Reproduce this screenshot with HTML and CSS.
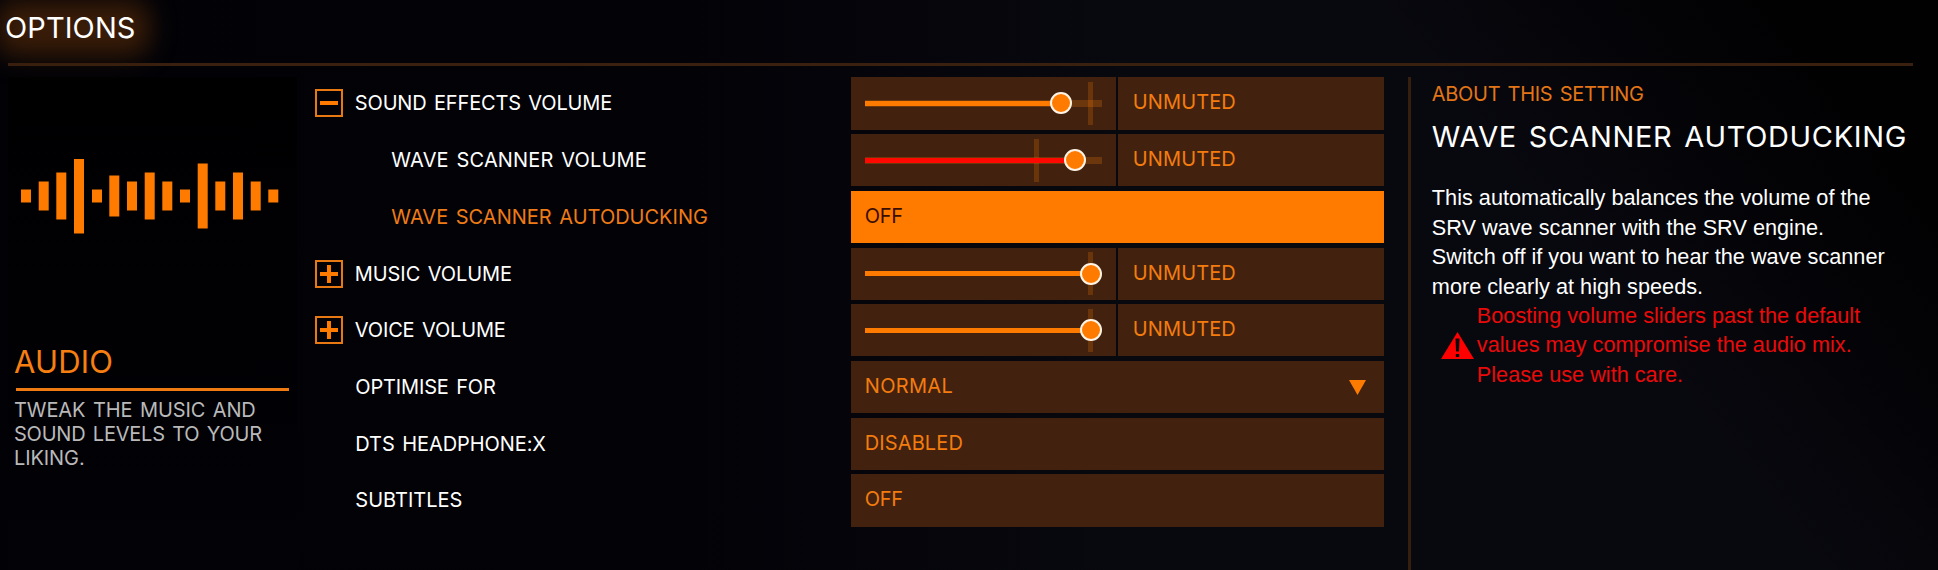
FILE: index.html
```html
<!DOCTYPE html>
<html lang="en">
<head>
<meta charset="utf-8">
<title>Options</title>
<link rel="stylesheet" href="styles.css">
</head>
<body>
<header class="header"><h1 class="title">OPTIONS</h1></header>
<main class="main">
  <aside class="category">
    <svg class="wave" viewBox="0 0 258 76" width="258" height="76" fill="#ff7b00">
      <rect x="0" y="31.5" width="10" height="13"/>
      <rect x="17.7" y="23.5" width="10" height="29"/>
      <rect x="35.3" y="14.5" width="10" height="47"/>
      <rect x="53" y="1" width="10" height="74.5"/>
      <rect x="71" y="31.5" width="10" height="13"/>
      <rect x="88.3" y="17.5" width="10" height="41"/>
      <rect x="106" y="23.5" width="10" height="29"/>
      <rect x="123.7" y="14.5" width="10" height="47"/>
      <rect x="141.3" y="23.5" width="10" height="29"/>
      <rect x="159" y="31.5" width="10" height="13"/>
      <rect x="176.7" y="5.5" width="10" height="65"/>
      <rect x="194.3" y="23.5" width="10" height="29"/>
      <rect x="212" y="14.5" width="10" height="47"/>
      <rect x="229.7" y="23.5" width="10" height="29"/>
      <rect x="247.3" y="31.5" width="10" height="13"/>
    </svg>
    <h2 class="category-name">AUDIO</h2>
    <p class="category-text">TWEAK THE MUSIC AND<br><span class="snug">SOUND LEVELS TO YOUR</span><br>LIKING.</p>
  </aside>

  <section class="settings">
    <div class="row">
      <div class="label"><span class="toggle minus"></span><span class="tight">SOUND EFFECTS VOLUME</span></div>
      <div class="cell slider"><div class="track"><i class="mark high"></i><i class="fill" style="width:196px"></i><i class="knob" style="left:196px"></i></div></div>
      <div class="cell mute">UNMUTED</div>
    </div>
    <div class="row">
      <div class="label sub"><span class="loose">WAVE SCANNER VOLUME</span></div>
      <div class="cell slider"><div class="track"><i class="mark mid"></i><i class="fill over" style="width:210px"></i><i class="knob" style="left:210px"></i></div></div>
      <div class="cell mute">UNMUTED</div>
    </div>
    <div class="row">
      <div class="label sub active">WAVE SCANNER AUTODUCKING</div>
      <div class="cell wide selected"><span class="off">OFF</span></div>
    </div>
    <div class="row">
      <div class="label"><span class="toggle plus"></span><span class="snug">MUSIC VOLUME</span></div>
      <div class="cell slider"><div class="track to-mark"><i class="mark high"></i><i class="fill" style="width:226px"></i><i class="knob" style="left:226px"></i></div></div>
      <div class="cell mute">UNMUTED</div>
    </div>
    <div class="row">
      <div class="label"><span class="toggle plus"></span><span class="tight">VOICE VOLUME</span></div>
      <div class="cell slider"><div class="track to-mark"><i class="mark high"></i><i class="fill" style="width:226px"></i><i class="knob" style="left:226px"></i></div></div>
      <div class="cell mute">UNMUTED</div>
    </div>
    <div class="row">
      <div class="label plain"><span class="tight">OPTIMISE FOR</span></div>
      <div class="cell wide"><span class="wider">NORMAL</span><svg class="arrow" viewBox="0 0 17 15" width="17" height="15"><path d="M0 0H17L8.5 15Z" fill="#ff7b00"/></svg></div>
    </div>
    <div class="row">
      <div class="label plain"><span class="snug">DTS HEADPHONE:X</span></div>
      <div class="cell wide">DISABLED</div>
    </div>
    <div class="row">
      <div class="label plain">SUBTITLES</div>
      <div class="cell wide"><span class="off">OFF</span></div>
    </div>
  </section>

  <aside class="about">
    <h3 class="about-head">ABOUT THIS SETTING</h3>
    <h2 class="about-title">WAVE SCANNER AUTODUCKING</h2>
    <p class="about-text">This automatically balances the volume of the<br>SRV wave scanner with the SRV engine.<br>Switch off if you want to hear the wave scanner<br>more clearly at high speeds.</p>
    <div class="warning">
      <svg viewBox="0 0 33 27" width="33" height="27"><path d="M16.5 0L33 27H0Z" fill="#f00"/><path d="M14.5 6.5H18.5L18 19.5H15ZM14.8 22H18.2V25H14.8Z" fill="#08080f"/></svg>
      <p>Boosting volume sliders past the default<br>values may compromise the audio mix.<br>Please use with care.</p>
    </div>
  </aside>
</main>
</body>
</html>
```
FILE: styles.css
```css
* { box-sizing: border-box; }
body {
  margin: 0;
  width: 1938px;
  height: 570px;
  overflow: hidden;
  display: flex;
  flex-direction: column;
  background:
    linear-gradient(52deg, transparent 76%, #010102 93%),
    linear-gradient(90deg, #020206 0, #020207 35%, #08080f 58%, #08080f 100%);
  color: #fff;
  font: 20px/24px Inter, "Liberation Sans", sans-serif;
  word-spacing: 2px;
}
h1, h2, h3, p { margin: 0; font-weight: 400; }

.header {
  position: relative;
  z-index: 0;
  width: 1905px;
  height: 66px;
  margin-left: 8px;
  border-bottom: 3px solid #3a200f;
}
.title {
  width: max-content;
  margin: 11.5px 0 0 -3px;
  font-size: 29px;
  line-height: 32px;
  letter-spacing: .1px;
}
.title::before {
  content: "";
  position: absolute;
  z-index: -1;
  left: -12px;
  top: 0;
  width: 154px;
  height: 56px;
  border-radius: 20px;
  background: #381c08;
  filter: blur(12px);
}

.main { flex: 1; display: flex; padding: 11.4px 0 0 8px; }

.category { width: 289px; background: linear-gradient(#000001, #020207); padding: 81px 0 0 8px; }
.wave { display: block; margin-left: 5px; }
.category-name {
  width: 273px;
  height: 46px;
  margin-top: 110.5px;
  border-bottom: 3px solid #ef7a12;
  color: #f77f11;
  font-size: 31px;
  line-height: 34px;
  letter-spacing: .2px;
  text-indent: -2px;
}
.category-text { margin: 7.5px 0 0 -2px; color: #b9b9ba; letter-spacing: -.1px; }
.category-text .snug { letter-spacing: -.22px; }
.snug { letter-spacing: -.08px; }

.settings {
  width: 1069px;
  margin-left: 18px;
  display: grid;
  grid-auto-rows: 52.2px;
  row-gap: 4.53px;
  align-content: start;
}
.row { display: grid; grid-template-columns: 534px 265px 266px; column-gap: 2px; }
.label { display: flex; align-items: center; gap: 12px; white-space: nowrap; }
.plain { padding-left: 40.5px; }
.sub { padding-left: 76.5px; }
.active { color: #ef7b16; }
.tight { letter-spacing: -.16px; }
.loose { letter-spacing: .15px; }

.toggle {
  width: 28px;
  height: 28px;
  border: 2px solid #e87812;
  background: linear-gradient(#ff7b00, #ff7b00) center / 18px 4px no-repeat;
}
.plus {
  background:
    linear-gradient(#ff7b00, #ff7b00) center / 18px 4px no-repeat,
    linear-gradient(#ff7b00, #ff7b00) center / 4px 18px no-repeat;
}

.cell {
  display: flex;
  align-items: center;
  padding: 0 14px 2px;
  background: #42220f;
  color: #f47c0e;
  letter-spacing: .1px;
}
.mute { padding-left: 15px; }
.wide { grid-column: 2 / 4; }
.selected { background: #ff7b00; color: #3a0d02; }
.off { letter-spacing: -.4px; }
.wider { letter-spacing: .3px; }
.arrow { margin: 2px 4px 0 auto; }

.slider { padding: 0 14px; }
.track { position: relative; width: 237px; height: 7px; background: #6d370d; }
.to-mark { background: none; }
.track i { position: absolute; }
.fill { left: 0; top: 1px; height: 5px; background: #ff7b00; }
.over { background: #ff0800; }
.mark { top: -18px; width: 5px; height: 43px; background: rgba(255, 123, 0, .22); }
.high { left: 223px; }
.mid { left: 169px; }
.knob {
  top: -7.5px;
  width: 22px;
  height: 22px;
  margin-left: -11px;
  border: 2px solid #fff4e6;
  border-radius: 50%;
  background: #ff7b00;
}

.about {
  width: 530px;
  margin-left: 24.5px;
  padding: 5px 0 0 20.5px;
  border-left: 3px solid #35200f;
  white-space: nowrap;
}
.about-head { color: #e27517; font-size: 20px; line-height: 24px; letter-spacing: -.3px; }
.about-title {
  margin-top: 13px;
  font-size: 29px;
  line-height: 36px;
  letter-spacing: .67px;
  word-spacing: 3px;
}
.about-text, .warning {
  font: 21.7px/29.4px "Liberation Sans", Arial, sans-serif;
  word-spacing: 0;
}
.about-text { margin-top: 28px; }
.warning { display: flex; align-items: center; gap: 3px; padding-left: 9px; color: #ea0a0a; }
```
